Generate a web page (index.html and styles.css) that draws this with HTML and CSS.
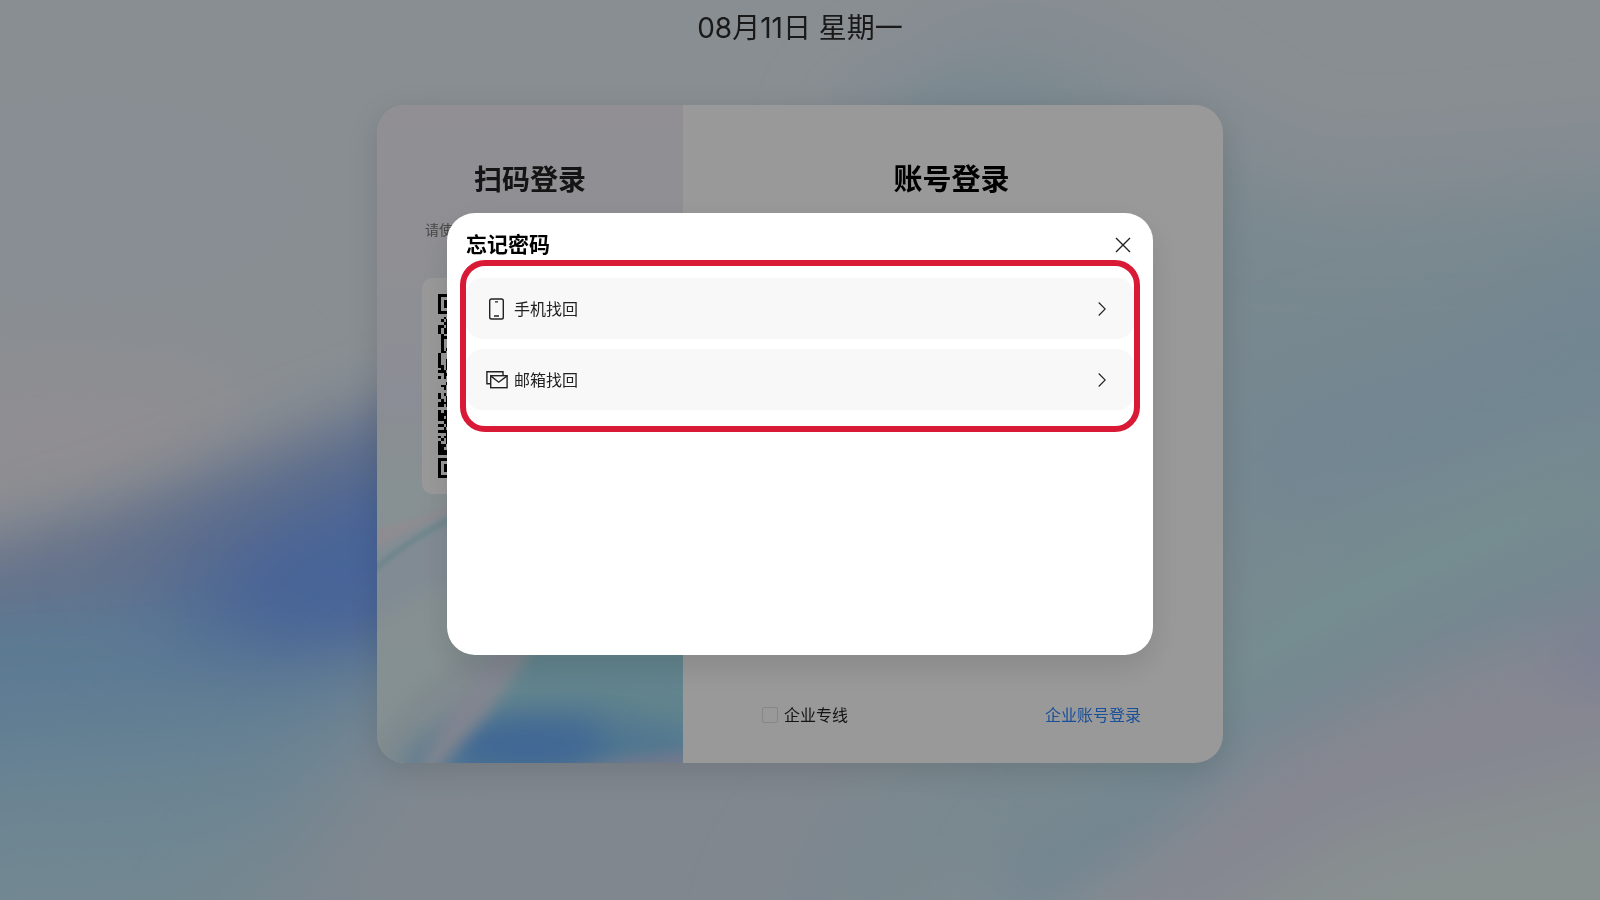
FILE: index.html
```html
<!DOCTYPE html>
<html lang="zh-CN">
	<head>
		<meta charset="UTF-8">
		<title>账号登录</title>
		<link rel="stylesheet" href="styles.css">
	</head>
	<body>
		<!-- 页面背景 -->
		<svg class="page-bg" viewBox="0 0 1600 900" preserveAspectRatio="none" aria-hidden="true">
			<defs>
				<filter id="b30" x="-50%" y="-50%" width="200%" height="200%"><feGaussianBlur stdDeviation="30"/></filter>
				<filter id="b50" x="-50%" y="-50%" width="200%" height="200%"><feGaussianBlur stdDeviation="50"/></filter>
			</defs>
			<rect width="1600" height="900" fill="#e4edf4"/>
			<ellipse cx="60" cy="430" rx="190" ry="70" fill="#f2edf3" filter="url(#b50)"/>
			<ellipse cx="60" cy="200" rx="280" ry="120" fill="#e5edf8" filter="url(#b50)"/>
			<g filter="url(#b30)">
				<path d="M-100 570L120 505L420 390L700 270V1000H-100Z" fill="#a9bee6"/>
				<path d="M-100 620L150 600L400 580L700 560V1000H-100Z" fill="#9accf7"/>
			</g>
			<path d="M130 600L280 520L420 460L620 400V650L300 660Z" fill="#73a3fa" filter="url(#b50)"/>
			<path d="M240 590L330 540L420 500V610L300 625Z" fill="#79a8ff" filter="url(#b30)"/>
			<path d="M-100 740L200 720L420 680L700 640V1000H-100Z" fill="#b0dcf5" filter="url(#b50)"/>
			<path d="M-100 840L160 830L300 810V1000H-100Z" fill="#c0e3f2" filter="url(#b50)"/>
			<path d="M210 990L330 780L440 660L1000 600L900 990Z" fill="#d6e1ee" filter="url(#b50)"/>
			<path d="M860 140L1000 40L1120 90L1300 200L1700 170V640L1300 820L1000 900L780 960L900 760Z" fill="#c9e3ef" filter="url(#b50)"/>
			<path d="M850 120L960 80L1050 110L960 160Z" fill="#cbe3f2" filter="url(#b30)"/>
			<path d="M1220 420L1460 350L1700 210V400L1420 500L1250 520Z" fill="#bddff5" filter="url(#b50)"/>
			<path d="M1100 740L1320 560L1500 480L1640 430V520L1400 620L1180 780Z" fill="#c1ecf1" filter="url(#b50)"/>
			<path d="M1000 860L1240 720L1400 640L1660 530V620L1400 680L1150 850L1000 940Z" fill="#bfdff3" filter="url(#b30)"/>
			<path d="M1050 960L1260 750L1460 660L1700 580V960Z" fill="#dfe2f2" filter="url(#b30)"/>
			<ellipse cx="1620" cy="650" rx="70" ry="30" fill="#cbd3f8" filter="url(#b30)"/>
			<path d="M1150 960L1360 830L1700 750V960Z" fill="#e4f0f1" filter="url(#b30)"/>
		</svg>

		<main class="login">
			<p class="date">08月11日 星期一</p>
			<div class="card">
				<section class="scan">
					<svg class="scan-bg" viewBox="0 0 306 658" preserveAspectRatio="none" aria-hidden="true">
						<defs>
							<linearGradient id="scanFill" x1="0" y1="0" x2="0" y2="1">
								<stop offset="0" stop-color="#f2eff6"/>
								<stop offset=".3" stop-color="#edeff7"/>
								<stop offset=".45" stop-color="#e7ecf8"/>
								<stop offset=".57" stop-color="#e2f0f3"/>
								<stop offset="1" stop-color="#dcf0f4"/>
							</linearGradient>
							<filter id="b2" x="-50%" y="-50%" width="200%" height="200%"><feGaussianBlur stdDeviation="2"/></filter>
							<filter id="b8" x="-50%" y="-50%" width="200%" height="200%"><feGaussianBlur stdDeviation="8"/></filter>
							<filter id="b15" x="-50%" y="-50%" width="200%" height="200%"><feGaussianBlur stdDeviation="16"/></filter>
						</defs>
						<rect width="306" height="658" fill="url(#scanFill)"/>
						<path d="M-10 426Q40 416 90 394V402Q40 422 -10 450Z" fill="#efeaf2" filter="url(#b2)"/>
						<path d="M-10 450Q40 424 90 398V470L-10 520Z" fill="#d8e8f6" filter="url(#b8)"/>
						<path d="M-10 471Q36 430 90 406" fill="none" stroke="#b9e0ea" stroke-width="6" filter="url(#b2)"/>
						<path d="M-10 644Q30 590 90 548H320V670H-10Z" fill="#d6e7ee" filter="url(#b8)"/>
						<path d="M76 670L110 600L160 530H330V670Z" fill="#a4dcec" filter="url(#b8)"/>
						<path d="M20 680L40 640L70 632L110 618L200 600L330 630V680Z" fill="#86c6f0" filter="url(#b15)"/>
						<ellipse cx="150" cy="640" rx="80" ry="26" fill="#6aacf8" filter="url(#b15)"/>
						<path d="M126 540H154L108 610L56 670H36L78 600Z" fill="#d8def0" filter="url(#b8)"/>
						<path d="M170 672L250 654L320 646V672Z" fill="#c4cbea" filter="url(#b8)"/>
					</svg>
					<h2>扫码登录</h2>
					<p class="tip">请使用移动端应用扫描二维码登录</p>
					<div class="qr">
						<svg id="qrcode" viewBox="0 0 65 65" shape-rendering="crispEdges" role="img" aria-label="登录二维码"></svg>
					</div>
				</section>
				<section class="account">
					<h2>账号登录</h2>
					<div class="account-foot">
						<label><input type="checkbox">企业专线</label>
						<a href="#">企业账号登录</a>
					</div>
				</section>
			</div>
		</main>

		<!-- 忘记密码弹窗 -->
		<div class="mask">
			<div class="dialog" role="dialog" aria-modal="true" aria-labelledby="dialogTitle">
				<div class="dialog-head">
					<h3 id="dialogTitle">忘记密码</h3>
					<button class="close" type="button" aria-label="关闭">
						<svg width="24" height="24" viewBox="0 0 24 24"><path d="M5 5L19 19M19 5L5 19"/></svg>
					</button>
				</div>
				<div class="ways">
					<button class="way" type="button">
						<svg class="way-icon" viewBox="0 0 22 22">
							<rect x="3.7" y="1" width="13.6" height="20" rx="1.8"/>
							<path d="M9 3.9H12M8 18H13"/>
						</svg>
						<span>手机找回</span>
						<svg class="arrow" viewBox="0 0 8 14"><path d="M.7 .5L7.2 7L.7 13.5"/></svg>
					</button>
					<button class="way" type="button">
						<svg class="way-icon" viewBox="0 0 22 22">
							<path d="M4.5 14.7H.9V2.8H17V6.4"/>
							<rect x="4.7" y="6.7" width="16.4" height="12"/>
							<path d="M4.7 6.9L12.7 13.2L21.1 6.9"/>
						</svg>
						<span>邮箱找回</span>
						<svg class="arrow" viewBox="0 0 8 14"><path d="M.7 .5L7.2 7L.7 13.5"/></svg>
					</button>
				</div>
			</div>
		</div>
		<script src="script.js"></script>
	</body>
</html>
```
FILE: styles.css
```css
*{
	padding: 0;
	margin: 0;
	box-sizing: border-box;
}
body{
	min-height: 100vh;
	color: #222;
	font-family: Inter, "Noto Sans CJK SC", sans-serif;
	font-size: 16px;
	line-height: 24px;
}
button{
	border: none;
	background: none;
	color: inherit;
	font: inherit;
	cursor: pointer;
}
h2{
	font-size: 28px;
	line-height: 40px;
	font-weight: 700;
	text-align: center;
}
.page-bg{
	position: fixed;
	top: 0;
	left: 0;
	width: 100%;
	height: 100%;
	z-index: -1;
}
.login{
	display: flex;
	flex-direction: column;
	align-items: center;
	padding: 8px 16px 40px;
}
.date{
	font-size: 28px;
	line-height: 40px;
	font-weight: 400;
	color: #2a2a2a;
}
.card{
	display: flex;
	width: 100%;
	max-width: 846px;
	min-height: 658px;
	margin-top: 57px;
	border-radius: 28px;
	overflow: hidden;
	background: #fff;
	box-shadow: 0 8px 32px rgba(0,0,0,.12);
}
/* 扫码登录 */
.scan{
	position: relative;
	flex: 0 0 306px;
	display: flex;
	flex-direction: column;
	align-items: center;
	padding-top: 55px;
	z-index: 0;
}
.scan-bg{
	position: absolute;
	top: 0;
	left: 0;
	width: 100%;
	height: 100%;
	z-index: -1;
}
.tip{
	margin-top: 20px;
	font-size: 14px;
	line-height: 20px;
	color: #777;
}
.qr{
	width: 216px;
	margin-top: 38px;
	padding: 16px;
	border-radius: 10px;
	background: #fff;
}
.qr svg{
	display: block;
	width: 100%;
}
/* 账号登录 */
.account{
	flex: 1;
	display: flex;
	flex-direction: column;
	justify-content: space-between;
	padding: 55px 82px 36px 79px;
}
.account h2{
	font-size: 29px;
	color: #000;
}
.account-foot{
	display: flex;
	justify-content: space-between;
	align-items: center;
}
.account-foot label{
	display: flex;
	align-items: center;
	gap: 6px;
}
.account-foot input{
	appearance: none;
	width: 16px;
	height: 16px;
	border: 1px solid #dcdfe6;
	border-radius: 2px;
}
.account-foot a{
	color: #2b85ff;
	text-decoration: none;
}
/* 弹窗 */
.mask{
	position: fixed;
	top: 0;
	left: 0;
	right: 0;
	bottom: 0;
	display: flex;
	align-items: center;
	justify-content: center;
	padding: 0 16px 32px;
	background: rgba(0,0,0,.4);
}
.dialog{
	width: 100%;
	max-width: 706px;
	min-height: 442px;
	padding: 16px 13px;
	border-radius: 28px;
	background: #fff;
	box-shadow: 0 12px 32px rgba(0,0,0,.12);
}
.dialog-head{
	display: flex;
	justify-content: space-between;
	align-items: center;
	height: 31px;
	padding: 0 5px 0 6px;
}
.dialog-head h3{
	font-size: 21px;
	line-height: 30px;
	font-weight: 700;
	color: #000;
}
.close{
	width: 24px;
	height: 24px;
}
.dialog svg{
	display: block;
	fill: none;
	stroke: #222;
	stroke-width: 1.4;
}
.ways{
	display: flex;
	flex-direction: column;
	gap: 10px;
	padding: 12px 0 16px;
	border: 6px solid #d91a37;
	border-radius: 25px;
}
.way{
	display: flex;
	align-items: center;
	gap: 6px;
	height: 61px;
	padding: 0 28px 0 20px;
	border-radius: 16px;
	background: #f8f8f8;
	text-align: left;
}
.way span{
	flex: 1;
}
.way-icon{
	width: 22px;
	height: 22px;
}
.dialog .arrow{
	width: 8px;
	height: 14px;
	stroke-width: 1.1;
}
```
FILE: script.js
```js
//二维码每一行左侧的点阵
var rows = [
	"####", "#...", "#.##", "#.##", "#.##", "#...", "####", "....",
	"..#.", ".#.#", "..##", "##.#", "#.##", "#.##", ".#..", ".###",
	".#..", ".#..", ".#..", ".#.#", ".##.", "#...", "#...", "#..#",
	"#..#", "##.#", ".#.#", "###.", "..##", "#.#.", "....", "...#",
	".##.", "..#.", "....", "#.#.", "#..#", ".#.#", "####", "##.#",
	"....", "#.##", "####", "##.#", "####", "..##", "##.#", "..#.",
	"####", "...#", "#.##", ".#.#", "#..#", "###.", "##..", "####",
	"####", "....", "####", "#...", "#.##", "#.##", "#.##", "#...", "####"
];
var d = "";
for(var y = 0;y < rows.length;y ++){
	for(var x = 0;x < rows[y].length;x ++){
		if(rows[y][x] === "#"){
			d += "M" + x + " " + y + "h1v1h-1z";
		}
	}
}
document.getElementById("qrcode").innerHTML = '<path d="' + d + '"/>';
```
